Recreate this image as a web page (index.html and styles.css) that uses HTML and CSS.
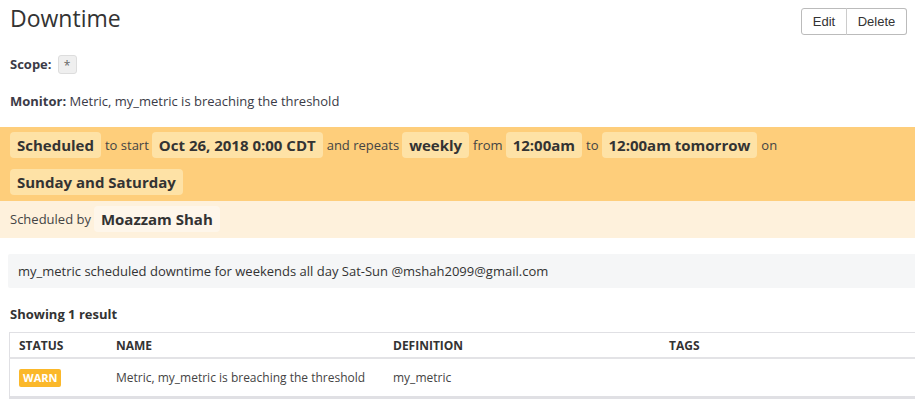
FILE: index.html
```html
<!DOCTYPE html>
<html>
<head>
<meta charset="utf-8">
<link rel="stylesheet" href="styles.css">
</head>
<body>
<div class="page">
  <div class="header">
    <h1 class="title">Downtime</h1>
    <div class="btn-group">
      <button class="btn">Edit</button><button class="btn">Delete</button>
    </div>
  </div>
  <div class="scope"><b>Scope:</b> <span class="scope-tag">*</span></div>
  <div class="monitor"><b>Monitor:</b> Metric, my_metric is breaching the threshold</div>
  <div class="schedule">
    <span class="pill">Scheduled</span><span class="word">to start</span><span class="pill">Oct 26, 2018 0:00 CDT</span><span class="word">and repeats</span><span class="pill">weekly</span><span class="word">from</span><span class="pill">12:00am</span><span class="word">to</span><span class="pill">12:00am tomorrow</span><span class="word">on</span><span class="pill">Sunday and Saturday</span>
  </div>
  <div class="author">
    <span class="word">Scheduled by</span><span class="pill">Moazzam Shah</span>
  </div>
  <div class="message">my_metric scheduled downtime for weekends all day Sat-Sun @mshah2099@gmail.com</div>
  <div class="count">Showing 1 result</div>
  <table class="results">
    <thead>
      <tr><th class="c-status">STATUS</th><th class="c-name">NAME</th><th class="c-def">DEFINITION</th><th>TAGS</th></tr>
    </thead>
    <tbody>
      <tr><td><span class="warn">WARN</span></td><td>Metric, my_metric is breaching the threshold</td><td>my_metric</td><td></td></tr>
    </tbody>
  </table>
</div>
</body>
</html>
```
FILE: styles.css
```css
html, body { margin: 0; padding: 0; background: #fff; }
body { font-family: "Open Sans", sans-serif; color: #3b3b47; font-size: 13px; }
.header { display: flex; justify-content: space-between; align-items: flex-start; padding: 8px 8px 0 10px; height: 40px; box-sizing: border-box; }
.title { margin: 0; font-weight: 400; font-size: 23px; line-height: 26px; color: #333; margin-top: -3px; }
.btn-group { display: flex; }
.btn { font-family: "Liberation Sans", Arial, sans-serif; font-size: 13px; color: #333; background: #fff; border: 1px solid #bbb; height: 27px; padding: 0 8px; margin: 0; cursor: pointer; }
.btn:first-child { border-radius: 3px 0 0 3px; width: 46px; }
.btn:last-child { border-radius: 0 3px 3px 0; border-left: 1px solid #ccc; margin-left: -1px; width: 61px; }
.scope { padding: 14px 10px 0 10px; height: 20px; display: flex; align-items: center; gap: 6px; }
.scope b { font-weight: 700; }
.scope-tag { display: inline-block; width: 19px; height: 19px; box-sizing: border-box; background: #efefef; border: 1px solid #ddd; border-radius: 3px; text-align: center; line-height: 19px; color: #666; font-size: 12px; }
.monitor { padding: 19px 10px 0 10px; line-height: 17px; height: 34px; box-sizing: content-box; }
.schedule { background: #fece7b; padding: 5px 10px 6px 10px; display: flex; flex-wrap: wrap; align-items: center; row-gap: 11px; }
.author { background: #fef1dc; padding: 5px 10px 6px 10px; display: flex; align-items: center; }
.pill { display: inline-block; font-weight: 700; font-size: 15px; line-height: 26px; height: 26px; padding: 0 7px; border-radius: 4px; color: #333; }
.schedule .pill { background: #fee2a6; }
.author .pill { background: #fef6ea; }
.word { font-size: 13px; padding: 0 3px 0 4px; color: #444; }
.author .word { padding-left: 0; }
.message { margin: 16px 0 0 8px; background: #f5f6f7; padding: 0 10px; height: 34px; line-height: 34px; font-size: 13px; color: #333; border-radius: 2px 0 0 2px; }
.count { font-weight: 700; font-size: 13px; padding: 17px 10px 0 10px; line-height: 18px; height: 27px; color: #333; }
.results { margin-left: 9px; width: 906px; border-collapse: collapse; border: 1px solid #e0e0e4; border-right: none; border-bottom: 3px solid #e0e0e4; font-size: 12px; }
.results th { text-align: left; font-weight: 700; font-size: 12px; color: #333; height: 24px; padding: 0 9px; border-bottom: 2px solid #e3e3e6; }
.results td { height: 37px; padding: 0 9px; color: #444; }
.c-status { width: 79px; }
.c-name { width: 259px; }
.c-def { width: 258px; }
.warn { display: inline-block; background: #fbb82a; color: #fff; font-weight: 700; font-size: 11px; height: 18px; line-height: 18px; padding: 0 4px; border-radius: 2px; }
```
